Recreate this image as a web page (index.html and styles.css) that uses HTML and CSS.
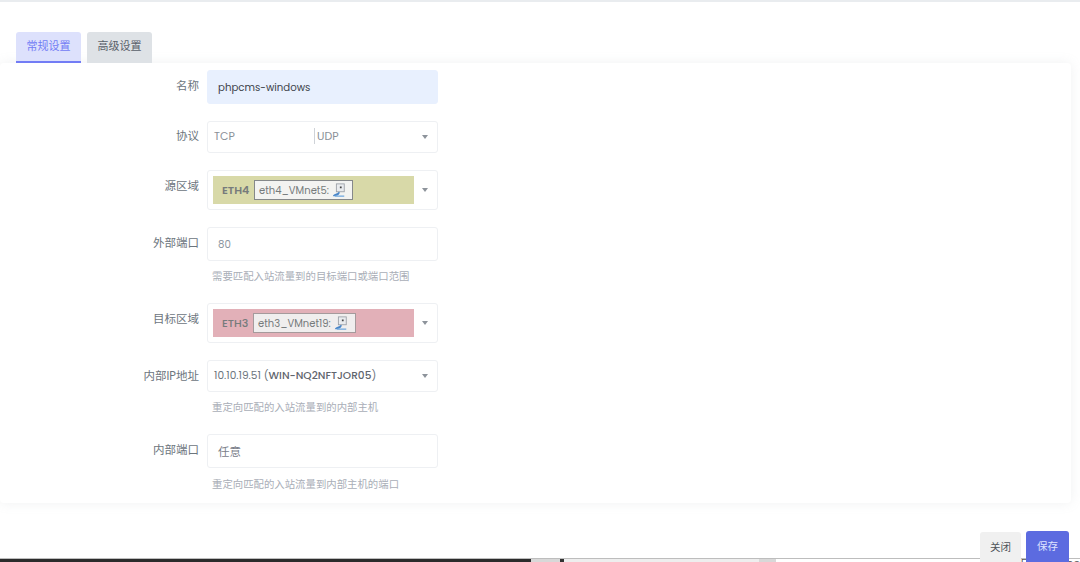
FILE: index.html
```html
<!DOCTYPE html>
<html lang="zh">
<head>
    <meta charset="UTF-8">
    <title>端口转发</title>
    <link rel="stylesheet" href="styles.css">
</head>
<body>
    <div class="topbar"></div>

    <div class="tabs">
        <div class="tab tab-active">常规设置</div>
        <div class="tab">高级设置</div>
    </div>

    <div class="card">
        <div class="row">
            <label class="row-label">名称</label>
            <div class="row-body">
                <div class="field field-filled">phpcms-windows</div>
            </div>
        </div>

        <div class="row">
            <label class="row-label label-up">协议</label>
            <div class="row-body">
                <div class="field field-proto">
                    <span class="proto-item">TCP</span>
                    <span class="proto-item proto-udp">UDP</span>
                    <span class="caret"></span>
                </div>
            </div>
        </div>

        <div class="row">
            <label class="row-label">源区域</label>
            <div class="row-body">
                <div class="field field-zone">
                    <div class="zone zone-green">
                        <b class="zone-name">ETH4</b>
                        <span class="zone-dev">eth4_VMnet5:
                            <svg class="dev-icon" viewBox="0 0 16 16"><rect x="5" y="1" width="9" height="9" fill="#e9ebee" stroke="#9a9fa6" stroke-width="1"/><rect x="9" y="4" width="2" height="2" fill="#444"/><path d="M1 15c1-3 4-2 7-5l1 1c-1 3-4 4-8 4z" fill="#4a86c8"/><path d="M3 15h11" stroke="#6aa5de" stroke-width="1.4"/></svg>
                        </span>
                    </div>
                    <span class="caret"></span>
                </div>
            </div>
        </div>

        <div class="row">
            <label class="row-label">外部端口</label>
            <div class="row-body">
                <div class="field field-port">80</div>
                <p class="help">需要匹配入站流量到的目标端口或端口范围</p>
            </div>
        </div>

        <div class="row">
            <label class="row-label">目标区域</label>
            <div class="row-body">
                <div class="field field-zone">
                    <div class="zone zone-red">
                        <b class="zone-name zone-name-thin">ETH3</b>
                        <span class="zone-dev zone-dev-wide">eth3_VMnet19:
                            <svg class="dev-icon" viewBox="0 0 16 16"><rect x="5" y="1" width="9" height="9" fill="#e9ebee" stroke="#9a9fa6" stroke-width="1"/><rect x="9" y="4" width="2" height="2" fill="#444"/><path d="M1 15c1-3 4-2 7-5l1 1c-1 3-4 4-8 4z" fill="#4a86c8"/><path d="M3 15h11" stroke="#6aa5de" stroke-width="1.4"/></svg>
                        </span>
                    </div>
                    <span class="caret"></span>
                </div>
            </div>
        </div>

        <div class="row">
            <label class="row-label">内部IP地址</label>
            <div class="row-body">
                <div class="field field-ip">
                    <span>10.10.19.51 (<b>WIN-NQ2NFTJOR05</b>)</span>
                    <span class="caret"></span>
                </div>
                <p class="help">重定向匹配的入站流量到的内部主机</p>
            </div>
        </div>

        <div class="row">
            <label class="row-label">内部端口</label>
            <div class="row-body">
                <div class="field field-any">任意</div>
                <p class="help help-last">重定向匹配的入站流量到内部主机的端口</p>
            </div>
        </div>
    </div>

    <div class="actions">
        <button class="btn btn-close">关闭</button>
        <button class="btn btn-save">保存</button>
    </div>

    <!-- bottom edge of the desktop behind the dialog -->
    <div class="desktop-strip">
        <span class="strip-dark"></span>
        <span class="strip-gap"></span>
        <span class="strip-mark"></span>
        <span class="strip-light"></span>
        <span class="strip-grey"></span>
        <span class="strip-text">15 &nbsp; this doc</span>
    </div>
</body>
</html>
```
FILE: styles.css
```css
* {
    box-sizing: border-box;
}
html, body {
    height: 562px;
    overflow: hidden;
}
body {
    margin: 0;
    background: #fff;
    color: #6a7080;
    font-family: Poppins, Inter, "Noto Sans", "Noto Sans CJK SC", sans-serif;
    font-size: 11px;
    position: relative;
}
.topbar {
    height: 2px;
    background: #e9ecef;
}

/* tabs */
.tabs {
    display: flex;
    gap: 6px;
    padding: 30px 0 0 16px;
}
.tab {
    width: 65px;
    height: 31px;
    line-height: 29px;
    text-align: center;
    background: #dee2e6;
    color: #59606a;
    border-radius: 3px 3px 0 0;
    font-size: 11px;
}
.tab-active {
    background: #dde1fc;
    color: #727cf5;
    border-bottom: 2px solid #727cf5;
}

/* form card */
.card {
    width: 1071px;
    height: 440px;
    padding-top: 7px;
    background: #fff;
    border-radius: 4px;
    box-shadow: 0 0 12px rgba(154, 161, 171, 0.15);
}
.row {
    display: flex;
    margin-bottom: 17px;
}
.row-label {
    width: 199px;
    padding-top: 8px;
    text-align: right;
    color: #6c757d;
    font-size: 11.5px;
    line-height: 16px;
}
.label-up {
    padding-top: 7px;
}
.row-body {
    width: 231px;
    margin-left: 8px;
}
.field {
    display: flex;
    align-items: center;
    position: relative;
    height: 34px;
    padding-left: 10px;
    border: 1px solid #eef0f3;
    border-radius: 3px;
    background: #fff;
    font-size: 10.2px;
}
.field-filled {
    padding-top: 2px;
    background: #e8f0fe;
    border-color: #e8f0fe;
    color: #3d434b;
}
.field-proto {
    height: 32px;
    padding-left: 6px;
    padding-bottom: 2px;
    color: #8a9097;
    font-size: 11px;
}
.proto-item {
    width: 100px;
}
.proto-udp {
    line-height: 16px;
    padding-left: 2px;
    border-left: 1px solid #cfd3d8;
}
.field-zone {
    height: 40px;
    padding-left: 5px;
}
.zone {
    display: flex;
    align-items: center;
    width: 201px;
    height: 28px;
    padding-left: 9px;
    color: #767b7c;
}
.zone-green {
    background: #d8d9a8;
}
.zone-red {
    background: #e2b0b8;
}
.zone-name {
    width: 32px;
    font-weight: 600;
    font-size: 11px;
}
.zone-name-thin {
    font-weight: 500;
    width: 31px;
}
.zone-dev {
    display: flex;
    align-items: center;
    gap: 3px;
    width: 99px;
    height: 20px;
    padding: 1px 0 0 4px;
    background: #f3f3f1;
    border: 1px solid #85888a;
    font-size: 10px;
    white-space: nowrap;
}
.zone-dev-wide {
    width: 103px;
    background: #f0eeee;
    border-color: #a59a9c;
}
.dev-icon {
    width: 14px;
    height: 14px;
    margin-top: -1px;
    flex-shrink: 0;
}
.field-port {
    padding-top: 2px;
    color: #8b95a0;
}
.field-ip {
    height: 32px;
    padding-left: 6px;
    color: #6c757d;
    font-size: 10.6px;
}
.field-ip b {
    font-weight: 500;
    color: #5f656d;
}
.field-any {
    color: #7a808a;
    font-size: 11.5px;
    padding-top: 2px;
}
.caret {
    position: absolute;
    right: 9px;
    top: 50%;
    margin-top: -2px;
    border-left: 3px solid transparent;
    border-right: 3px solid transparent;
    border-top: 4px solid #8d939b;
}
.help {
    margin: 10px 0 0 5px;
    height: 12px;
    line-height: 12px;
    color: #a9aeb7;
    font-size: 10.4px;
}
.help-last {
    margin-top: 11px;
}
.row:has(.help) {
    margin-bottom: 20px;
}

/* buttons */
.actions {
    display: flex;
    justify-content: flex-end;
    align-items: flex-end;
    gap: 5px;
    height: 59px;
    padding-right: 11px;
}
.btn {
    border: none;
    font-family: inherit;
    font-size: 10.5px;
    border-radius: 3px 3px 0 0;
}
.btn-close {
    width: 41px;
    height: 30px;
    background: #f0f0f0;
    color: #4f5359;
}
.btn-save {
    width: 43px;
    height: 31px;
    background: #5c6be0;
    color: #dfe3ff;
}

.desktop-strip {
    position: absolute;
    left: 0;
    right: 0;
    bottom: 0;
    z-index: -1;
    display: flex;
    height: 4px;
    overflow: hidden;
    background: #fff;
    border-top: 1px solid #bdbdbd;
}
.strip-dark {
    width: 532px;
    background: #2b2b2b;
}
.strip-gap {
    width: 29px;
    background: #d8d8d8;
}
.strip-mark {
    width: 4px;
    background: #333;
}
.strip-light {
    width: 196px;
    background: #eeeeee;
}
.strip-grey {
    width: 17px;
    background: #d8d8d8;
}
.strip-text {
    margin-left: 241px;
    color: #555;
    font-size: 11px;
    line-height: 8px;
    white-space: nowrap;
}
```
